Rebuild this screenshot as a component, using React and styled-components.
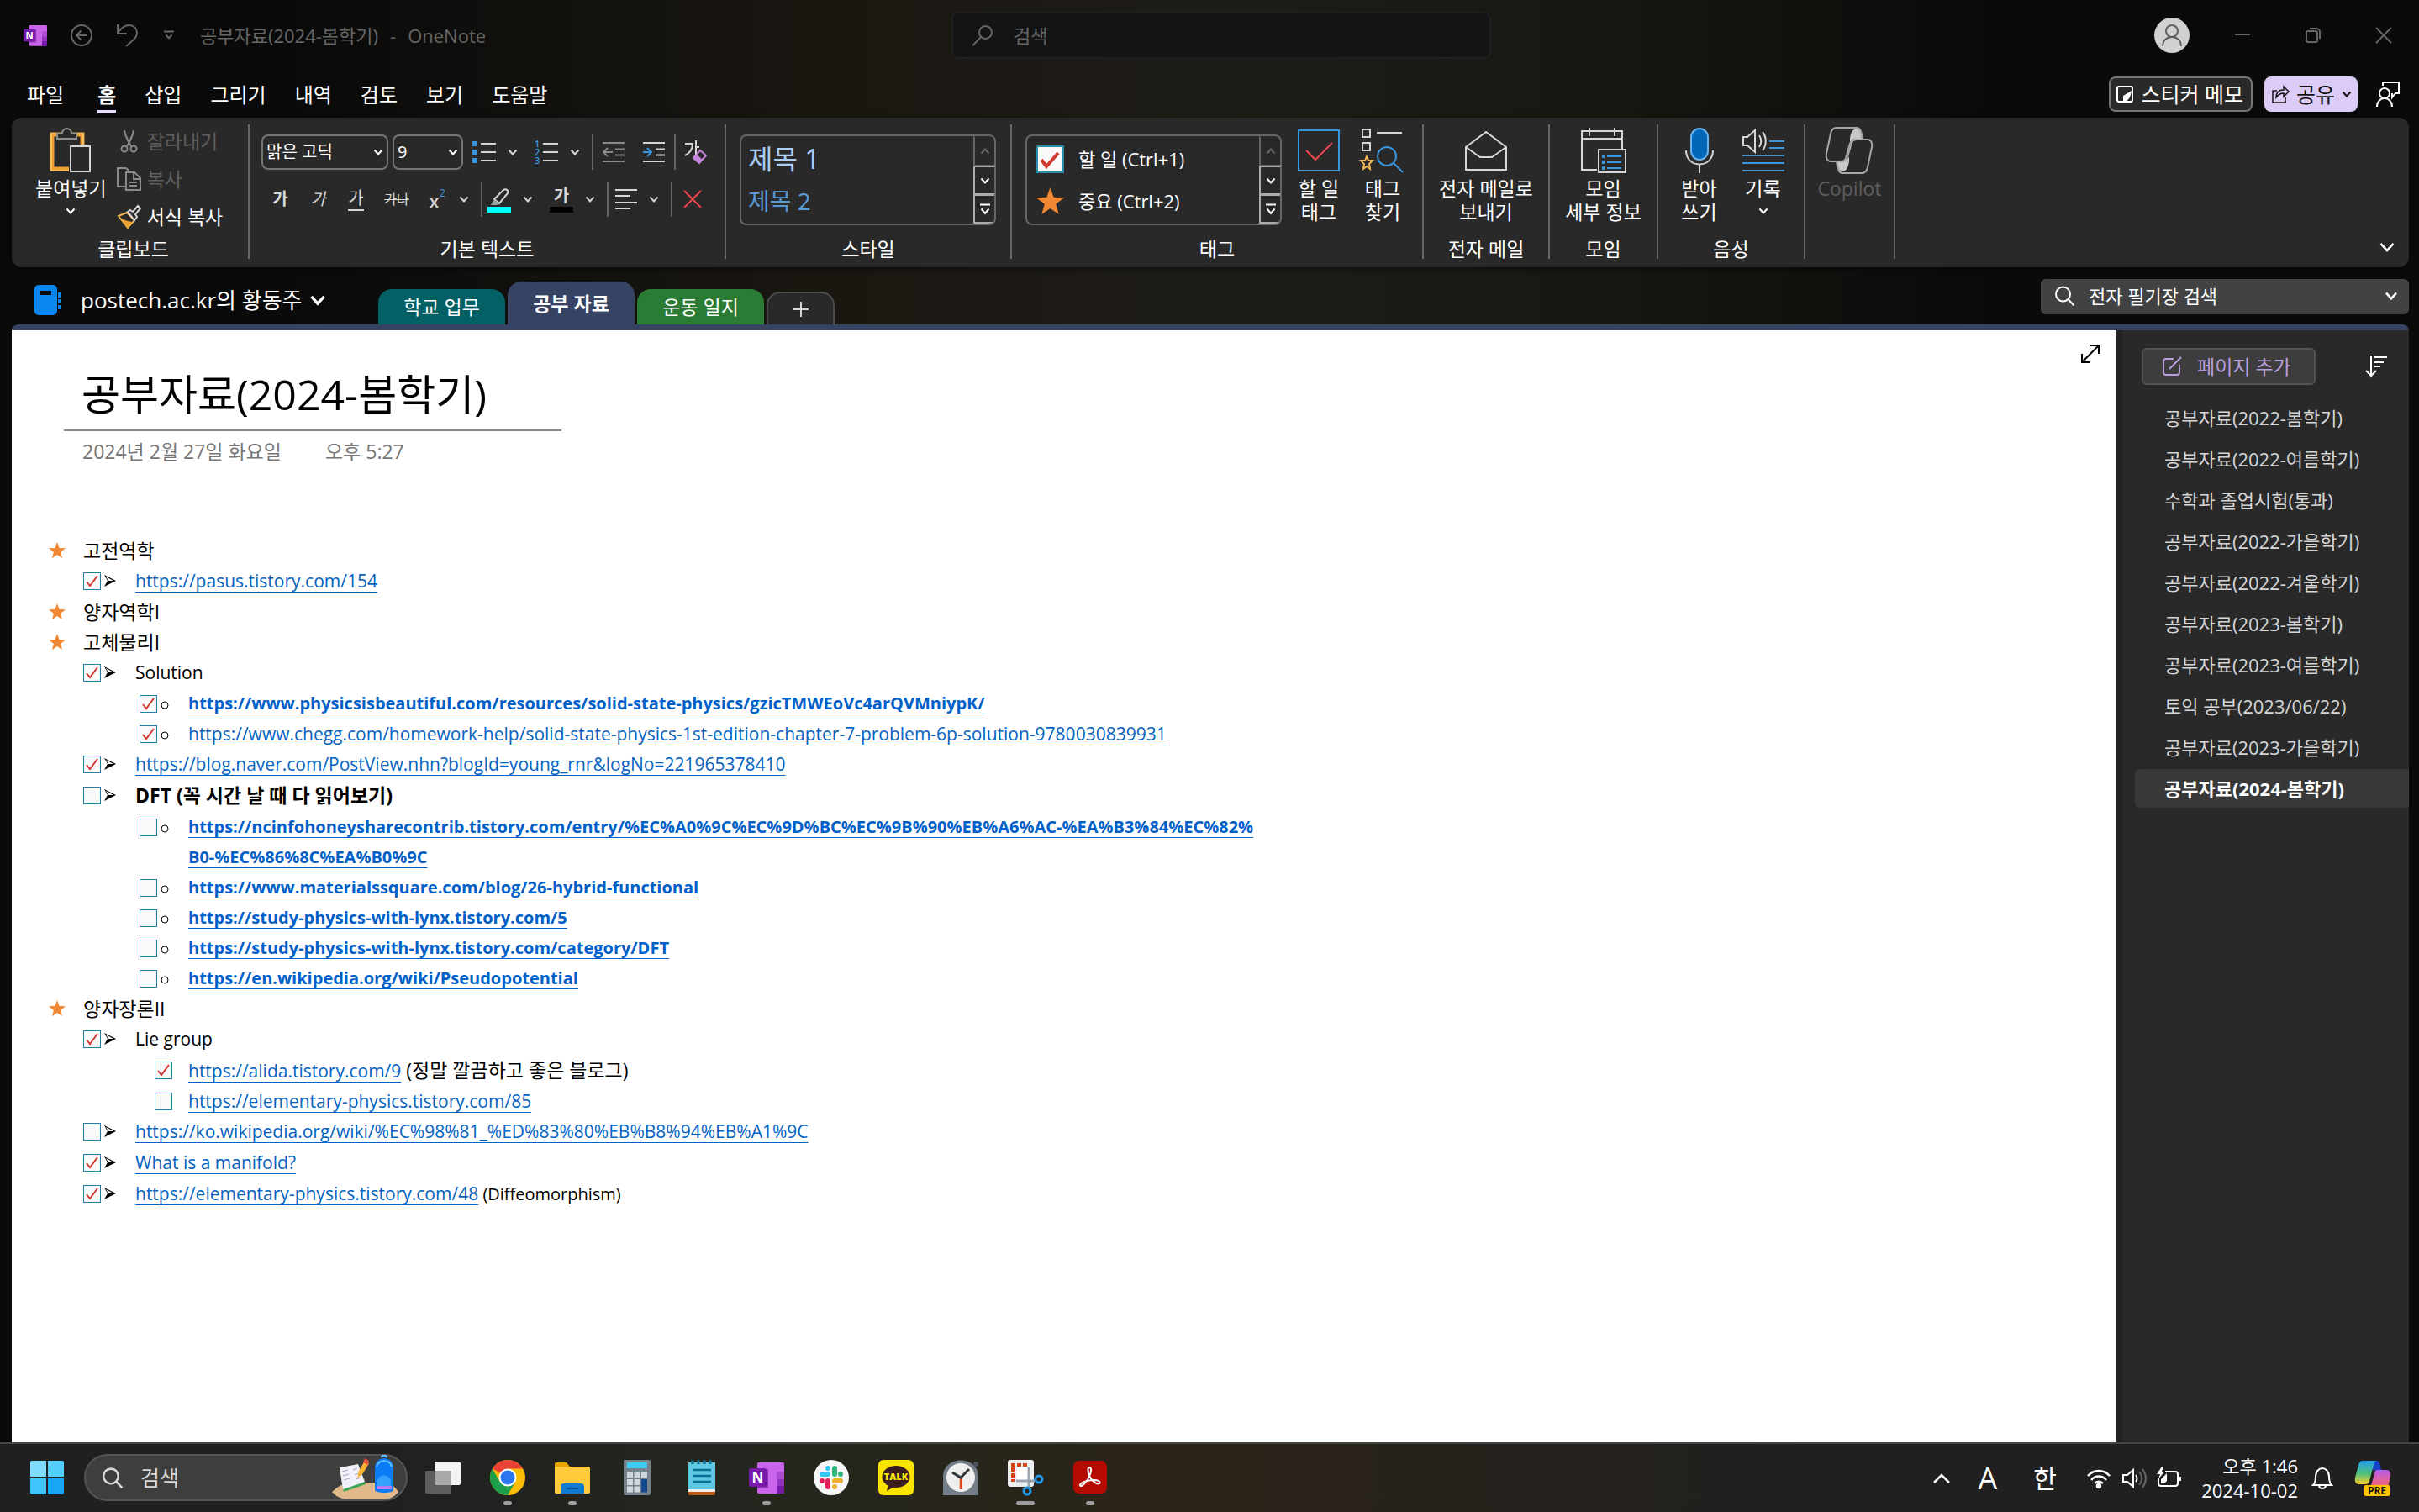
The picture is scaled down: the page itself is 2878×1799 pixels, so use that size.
import React from 'react'
import styled, { createGlobalStyle, css } from 'styled-components'

const color = {
  black: '#0a0a0a',
  panel: '#292929',
  field: '#424242',
  line: '#666666',
  muted: '#5e5e5e',
  text: '#ffffff',
  icon: '#d6d6d6',
  blue: '#3a96dd',
  section: '#364363',
  teal: '#036166',
  green: '#2a7b34',
  lilac: '#dccbf7',
  link: '#0563c1',
  linkBold: '#0060c8',
  star: '#ef8733',
}

const GlobalStyle = createGlobalStyle`
  * {
    box-sizing: border-box;
  }
  body {
    margin: 0;
    background: ${color.black};
    color: ${color.text};
    font-family: 'Open Sans', 'Noto Sans CJK KR', sans-serif;
    font-size: 22px;
    line-height: 28px;
  }
  button, input, select {
    font: inherit;
    color: inherit;
    background: none;
    border: none;
    padding: 0;
    margin: 0;
    outline: none;
  }
  ul {
    list-style: none;
    margin: 0;
    padding: 0;
  }
`

const Svg = styled.svg.attrs((p) => ({
  fill: p.fill || 'none',
  stroke: p.stroke || 'currentColor',
  strokeWidth: p.strokeWidth || 2,
}))`
  display: block;
  flex: none;
  overflow: visible;
`

const Icon = ({ w = 28, h = 28, box, children, ...rest }) => (
  <Svg width={w} height={h} viewBox={box || `0 0 ${w} ${h}`} aria-hidden="true" {...rest}>
    {children}
  </Svg>
)

/* ---------- small shared icons ---------- */

const Chevron = ({ size = 12, weight = 2 }) => (
  <Icon w={size} h={size} box="0 0 12 12" strokeWidth={weight}>
    <path d="M1.500 3.500 6 8.500l4.500-5" />
  </Icon>
)

const SearchIcon = ({ flip, size = 26, weight = 2 }) => (
  <Icon w={size} h={size} box="0 0 26 26" strokeWidth={weight}>
    {flip ? <path d="M24 9.500a7.500 7.500 0 1 1-15 0 7.500 7.500 0 0 1 15 0ZM11 15 1.500 25" /> : <path d="M20 11a8.500 8.500 0 1 1-17 0 8.500 8.500 0 0 1 17 0ZM17.500 17l7 7.500" />}
  </Icon>
)

const StarIcon = ({ size = 22 }) => (
  <Icon w={size} h={size} box="0 0 22 22" stroke="none" fill={color.star}>
    <path d="M11 0l2.800 7.800 8.200.3-6.500 5.100 2.300 8.100L11 16.600l-6.800 4.700 2.300-8.100L0 8.100l8.200-.3z" />
  </Icon>
)

const MoreGlyph = () => (
  <Icon w={14} h={16}>
    <path d="M1 2.500h12M2.500 7.500 7 13l4.500-5.500" />
  </Icon>
)

/* ---------- title bar ---------- */

const Page = styled.div`
  min-height: 100vh;
  display: flex;
  flex-direction: column;
  background: linear-gradient(90deg, #0a0a0a 12%, #1a1711 34%, #1e1c17 50%, #171811 66%, #0a0a0a 82%);
`

const TitleBar = styled.header`
  display: grid;
  grid-template-columns: 1fr 642px 1fr;
  align-items: center;
  height: 84px;
  padding-left: 28px;
  color: ${color.line};
`

const TitleLeft = styled.div`
  display: flex;
  align-items: center;
  gap: 28px;
`

const WindowTitle = styled.div`
  display: flex;
  gap: 14px;
`

const PlainButton = styled.button`
  display: flex;
  align-items: center;
  justify-content: center;
`

const TitleSearch = styled.label`
  display: flex;
  align-items: center;
  gap: 24px;
  height: 56px;
  padding-left: 22px;
  border: 2px solid #1f1f1f;
  border-radius: 8px;
  background: #141414;
`

const SearchInput = styled.input`
  flex: 1;
  min-width: 0;
  &::placeholder {
    color: inherit;
    opacity: 1;
  }
`

const WindowButtons = styled.div`
  display: flex;
  justify-content: flex-end;
`

const WindowButton = styled(PlainButton)`
  width: 84px;
  height: 84px;
`

const Avatar = styled.span`
  display: flex;
  align-items: center;
  justify-content: center;
  width: 42px;
  height: 42px;
  border-radius: 50%;
  background: #d1d1d1;
  color: #5c5c5c;
`

const OneNoteLogo = ({ size = 28 }) => (
  <Icon w={size} h={size} box="0 0 42 42" stroke="none">
    <rect x="10" y="3" width="32" height="37" rx="2" fill="#ca64ea" />
    <path d="M33 14h9v9h-9z" fill="#ae4bd5" />
    <path d="M33 23h9v8h-9z" fill="#9332bf" />
    <path d="M33 31h9v7a2 2 0 0 1-2 2h-7z" fill="#7719aa" />
    <path d="M10 11h13v23H10z" fill="#5b1389" opacity=".5" />
    <rect x="0" y="10" width="21" height="22" rx="2" fill="#7719aa" />
    <text x="10.500" y="27" textAnchor="middle" fill="#fff" fontSize="17" fontWeight="700">N</text>
  </Icon>
)

const AppTitleBar = () => (
  <TitleBar>
    <TitleLeft>
      <OneNoteLogo />
      <PlainButton aria-label="뒤로">
        <Icon w={26} h={26}>
          <circle cx="13" cy="13" r="12" />
          <path d="M20 13H7M12.500 7.500 7 13l5.500 5.500" />
        </Icon>
      </PlainButton>
      <PlainButton aria-label="실행 취소">
        <Icon w={26} h={28}>
          <path d="M2 1v11h11M2 11.500C6 5 11 2 16 2c5 0 9 4 9 9 0 7-7 10-13 16" />
        </Icon>
      </PlainButton>
      <PlainButton aria-label="빠른 실행 도구 모음">
        <Icon w={18} h={12}>
          <path d="M3 1.500h12M5.500 5.500 9 9.500l3.500-4" />
        </Icon>
      </PlainButton>
      <WindowTitle>
        <span>공부자료(2024-봄학기)</span>
        <span>-</span>
        <span>OneNote</span>
      </WindowTitle>
    </TitleLeft>
    <TitleSearch>
      <SearchIcon flip />
      <SearchInput aria-label="검색" placeholder="검색" />
    </TitleSearch>
    <WindowButtons>
      <WindowButton aria-label="계정">
        <Avatar>
          <Icon w={26} h={28}>
            <circle cx="13" cy="9" r="7" />
            <path d="M2 27c0-7 5-11 11-11s11 4 11 11" />
          </Icon>
        </Avatar>
      </WindowButton>
      <WindowButton aria-label="최소화">
        <Icon w={18} h={18}><path d="M0 8h18" /></Icon>
      </WindowButton>
      <WindowButton aria-label="이전 크기로 복원">
        <Icon w={18} h={18}>
          <rect x="1" y="4" width="13" height="13" rx="2" />
          <path d="M5 1h8a4 4 0 0 1 4 4v8" />
        </Icon>
      </WindowButton>
      <WindowButton aria-label="닫기">
        <Icon w={18} h={18}><path d="m0 0 18 18M18 0 0 18" /></Icon>
      </WindowButton>
    </WindowButtons>
  </TitleBar>
)

/* ---------- menu ---------- */

const MenuRow = styled.div`
  display: flex;
  align-items: flex-start;
  justify-content: space-between;
  height: 56px;
  padding: 7px 23px 0 32px;
`

const MenuTabs = styled.nav`
  display: flex;
  gap: 34px;
`

const MenuTab = styled.button`
  height: 44px;
  padding-top: 3px;
  border-bottom: 4px solid ${(p) => (p.$active ? '#e8dcff' : 'transparent')};
  font-size: 24px;
  font-weight: ${(p) => (p.$active ? 700 : 400)};
  line-height: 34px;
  &:first-child {
    margin-right: 6px;
  }
`

const MenuActions = styled.div`
  display: flex;
  align-items: center;
`

const ActionButton = styled.button`
  display: flex;
  align-items: center;
  justify-content: space-between;
  height: 42px;
  padding: 0 9px 0 7px;
  border: 2px solid #757575;
  border-radius: 8px;
  background: ${color.panel};
  font-size: 25px;
  width: 171px;
`

const ShareButton = styled(ActionButton)`
  width: 111px;
  margin: 0 22px 0 14px;
  border-color: ${color.lilac};
  background: ${color.lilac};
  color: #111111;
  padding: 0 5px 0 7px;
`

const tabs = ['파일', '홈', '삽입', '그리기', '내역', '검토', '보기', '도움말']

const Menu = () => (
  <MenuRow>
    <MenuTabs>
      {tabs.map((name) => (
        <MenuTab key={name} $active={name === '홈'}>{name}</MenuTab>
      ))}
    </MenuTabs>
    <MenuActions>
      <ActionButton>
        <Icon w={20} h={20}>
          <rect x="1" y="1" width="18" height="18" rx="2" />
          <path d="M18 6 8 12v6h4c3-2 5-5 6-12Z" fill="#fff" stroke="none" />
        </Icon>
        스티커 메모
      </ActionButton>
      <ShareButton>
        <Icon w={21} h={22} strokeWidth="1.500">
          <path d="M6 7H1v14h15v-6M5 15c0-6 3-9 9-9V2l6 6-6 6v-4c-4 0-6 1-9 5Z" />
        </Icon>
        공유
        <Chevron size={12} />
      </ShareButton>
      <PlainButton aria-label="의견">
        <Icon w={28} h={30}>
          <circle cx="10" cy="14" r="6" />
          <path d="M1 30c0-6 4-10 9-10s9 4 9 10M8 5V1h19v13h-4l-4 5v-5" />
        </Icon>
      </PlainButton>
    </MenuActions>
  </MenuRow>
)

/* ---------- ribbon ---------- */

const RibbonBar = styled.section`
  display: flex;
  height: 178px;
  margin: 0 12px 0 14px;
  padding: 8px 0 10px 8px;
  border-radius: 12px;
  background: ${color.panel};
  box-shadow: 0 2px 6px rgba(0, 0, 0, 0.5);
`

const Group = styled.div`
  display: flex;
  flex-direction: column;
  justify-content: space-between;
  width: ${(p) => p.$width}px;
  border-right: 2px solid ${color.line};
`

const GroupBody = styled.div`
  display: flex;
  justify-content: ${(p) => p.$justify || 'flex-start'};
  padding-left: ${(p) => p.$pad || 0}px;
`

const GroupLabel = styled.div`
  text-align: center;
  font-size: 23px;
  line-height: 24px;
`

const BigButton = styled.button`
  display: flex;
  flex-direction: column;
  align-items: center;
  min-width: 76px;
  padding-top: 3px;
  white-space: pre-line;
  font-size: 23px;
  color: ${(p) => (p.$off ? color.muted : color.text)};
  & > svg {
    margin-top: 7px;
  }
`

const BigIcon = styled.span`
  display: flex;
  align-items: center;
  height: 56px;
  margin-bottom: 3px;
  color: ${color.icon};
`

const SmallColumn = styled.div`
  display: flex;
  flex-direction: column;
  gap: 5px;
  margin-left: 12px;
`

const SmallButton = styled.button`
  display: flex;
  align-items: center;
  gap: 7px;
  height: 40px;
  font-size: 23px;
  color: ${(p) => (p.$off ? color.muted : color.text)};
`

const ToolRows = styled.div`
  display: flex;
  flex-direction: column;
  gap: 14px;
  padding-top: 12px;
`

const ToolRow = styled.div`
  display: flex;
  align-items: center;
  height: 42px;
`

const Tool = styled.button`
  display: flex;
  align-items: center;
  justify-content: center;
  width: ${(p) => p.$width || 48}px;
  height: 42px;
  color: ${color.icon};
`

const Split = styled(Tool)`
  justify-content: flex-start;
  gap: 14px;
  width: 74px;
  padding-left: 6px;
`

const Divider = styled.span`
  width: 2px;
  height: 42px;
  background: ${color.line};
`

const SelectBox = styled.label`
  display: grid;
  align-items: center;
  width: ${(p) => p.$width}px;
  height: 42px;
  margin-right: 5px;
  border: 2px solid #757575;
  border-radius: 8px;
  & > * {
    grid-area: 1 / 1;
  }
  & > svg {
    justify-self: end;
    margin-right: 4px;
  }
`

const Select = styled.select`
  appearance: none;
  height: 36px;
  padding-left: 4px;
  font-size: 20px;
  option {
    background: ${color.panel};
  }
`

const Ga = styled.span`
  font-size: 20px;
  line-height: 26px;
  font-weight: ${(p) => (p.$bold ? 700 : 400)};
  font-style: ${(p) => (p.$italic ? 'italic' : 'normal')};
  ${(p) => p.$under && css`border-bottom: 2px solid ${color.icon};`}
  ${(p) => p.$strike && css`
    text-decoration: line-through;
    font-size: 16px;
  `}
`

const ColorMark = styled.span`
  display: flex;
  flex-direction: column;
  align-items: center;
  justify-content: flex-end;
  width: 28px;
  height: 32px;
  border-bottom: 7px solid ${(p) => p.$color};
`

const Gallery = styled.div`
  display: flex;
  width: 305px;
  height: 108px;
  margin-top: 12px;
  border: 2px solid ${color.line};
  border-radius: 8px;
  overflow: hidden;
`

const GalleryItems = styled.div`
  flex: 1;
  display: flex;
  flex-direction: column;
  justify-content: space-around;
  align-items: flex-start;
  padding: 2px 0 2px ${(p) => p.$pad}px;
`

const StyleItem = styled.button`
  font-size: ${(p) => p.$size}px;
  line-height: 46px;
  color: ${(p) => p.$color};
`

const TagItem = styled.button`
  display: flex;
  align-items: center;
  gap: 17px;
  height: 46px;
`

const GalleryScroll = styled.div`
  display: grid;
  grid-template-rows: 36px 34px 34px;
  width: 25px;
`

const ScrollButton = styled(PlainButton)`
  border-left: 2px solid ${(p) => (p.$off ? color.line : '#ababab')};
  border-bottom: 2px solid ${(p) => (p.$off ? color.line : '#ababab')};
  border-top: 1px solid ${(p) => (p.$off ? 'transparent' : '#ababab')};
  color: ${(p) => (p.$off ? color.line : color.text)};
`

const TickIcon = ({ size = 33 }) => (
  <Icon w={size} h={size} box="0 0 33 33">
    <rect x="1" y="1" width="31" height="31" fill="#fafafa" stroke="#2a8dad" />
    <path d="m6 17 6 8L26 9" stroke="#d13a32" strokeWidth="4" />
  </Icon>
)

const Collapse = styled(PlainButton)`
  align-self: flex-end;
  margin: 0 16px 2px auto;
  height: 24px;
`

const Scroller = () => (
  <GalleryScroll>
    <ScrollButton $off aria-label="위로">
      <Icon w={12} h={12}><path d="M1.500 8.500 6 3.500l4.500 5" /></Icon>
    </ScrollButton>
    <ScrollButton aria-label="아래로"><Chevron /></ScrollButton>
    <ScrollButton aria-label="자세히"><MoreGlyph /></ScrollButton>
  </GalleryScroll>
)

const ListGlyph = ({ numbered }) => (
  <Icon w={28} h={28}>
    <path d="M10 4h18M10 14h18M10 24h18" />
    {numbered ? (
      <g fill={color.blue} stroke="none" fontSize="11" fontWeight="600">
        <text x="0" y="8">1</text>
        <text x="0" y="18">2</text>
        <text x="0" y="28">3</text>
      </g>
    ) : (
      <path d="M0 4h6M0 14h6M0 24h6" stroke={color.blue} strokeWidth="6" />
    )}
  </Icon>
)

const Ribbon = () => (
  <RibbonBar>
    <Group $width={275}>
      <GroupBody $pad={20}>
        <BigButton>
          <BigIcon>
            <Icon w={48} h={54}>
              <path d="M22 49H2V8h36v12" stroke="#f0a030" strokeWidth="5" />
              <path d="M22 51H1V7h38v13" stroke="#fbd68c" strokeWidth="1" />
              <path d="M8 12V7h6c0-8 11-8 11 0h6v6H8Z" fill={color.panel} stroke="#8f8f8f" />
              <rect x="24" y="22" width="23" height="30" fill={color.panel} />
            </Icon>
          </BigIcon>
          붙여넣기
          <Chevron />
        </BigButton>
        <SmallColumn>
          <SmallButton $off>
            <Icon w={29} h={28} stroke="#8a8a8a">
              <path d="M9 1c1 7 5 14 8 19M20 1c-1 7-5 14-8 19" />
              <circle cx="9" cy="23" r="3.500" />
              <circle cx="20" cy="23" r="3.500" />
            </Icon>
            잘라내기
          </SmallButton>
          <SmallButton $off>
            <Icon w={29} h={28} stroke="#8a8a8a">
              <path d="M10 23H1V1h10l3 3M11 6h10l7 7v14H11ZM20 6v8h8M15 18h9M15 22h9" />
            </Icon>
            복사
          </SmallButton>
          <SmallButton>
            <Icon w={29} h={28}>
              <path d="m2 13 10-4 9 9-8 9Z" stroke="#f0b64f" fill="#292929" />
              <path d="m5 16 8 3 5 1-5 7Z" fill="#f0a030" stroke="none" />
              <path d="m13 8 3-2 3 2 6-7 3 3-6 7 2 3-3 4Z" stroke={color.icon} fill="#292929" />
            </Icon>
            서식 복사
          </SmallButton>
        </SmallColumn>
      </GroupBody>
      <GroupLabel>클립보드</GroupLabel>
    </Group>

    <Group $width={567}>
      <GroupBody $pad={14}>
        <ToolRows>
          <ToolRow>
            <SelectBox $width={151}>
              <Select aria-label="글꼴"><option>맑은 고딕</option></Select>
              <Chevron />
            </SelectBox>
            <SelectBox $width={84}>
              <Select aria-label="글꼴 크기"><option>9</option></Select>
              <Chevron />
            </SelectBox>
            <Split aria-label="글머리 기호"><ListGlyph /><Chevron /></Split>
            <Split aria-label="번호 매기기"><ListGlyph numbered /><Chevron /></Split>
            <Divider />
            <Tool aria-label="내어쓰기">
              <Icon w={26} h={26} stroke="#8a8a8a">
                <path d="M0 2h26M15 9.500h11M15 16.500h11M0 24h26M12 13H1M6 8l-5 5 5 5" />
              </Icon>
            </Tool>
            <Tool aria-label="들여쓰기">
              <Icon w={26} h={26}>
                <path d="M0 2h26M15 9.500h11M15 16.500h11M0 24h26" />
                <path d="M0 13h10M5 8l5 5-5 5" stroke={color.blue} />
              </Icon>
            </Tool>
            <Divider />
            <Tool aria-label="서식 지우기">
              <Icon w={30} h={30}>
                <path d="M2 5h9c0 7-3 11-9 14M15 1v17M15 9h4" />
                <path d="m12 22 8-9 7 6-8 9Z" fill={color.panel} stroke="#c486dd" />
                <path d="m12 22 4-4 7 6-4 4Z" fill="#c486dd" stroke="none" />
              </Icon>
            </Tool>
          </ToolRow>
          <ToolRow>
            <Tool $width={45}><Ga $bold>가</Ga></Tool>
            <Tool $width={45}><Ga $italic>가</Ga></Tool>
            <Tool $width={45}><Ga $under>가</Ga></Tool>
            <Tool $width={52}><Ga $strike>가나</Ga></Tool>
            <Split aria-label="위 첨자">
              <Icon w={28} h={28} stroke="none" fill={color.icon}>
                <text x="7" y="24" fontSize="20" fontWeight="600">x</text>
                <text x="19" y="11" fontSize="12" fill={color.blue}>2</text>
              </Icon>
              <Chevron />
            </Split>
            <Divider />
            <Split aria-label="강조색">
              <ColorMark $color="#00ffff">
                <Icon w={26} h={22}>
                  <path d="m7 13 11-11c3-2 7 1 5 4L13 18Z" />
                  <path d="m7 13 6 5-3 2H3Z" fill="#a0a0a0" stroke="none" />
                </Icon>
              </ColorMark>
              <Chevron />
            </Split>
            <Split aria-label="글꼴 색">
              <ColorMark $color="#000000"><Ga $bold>가</Ga></ColorMark>
              <Chevron />
            </Split>
            <Divider />
            <Split aria-label="맞춤">
              <Icon w={28} h={26}><path d="M2 2h26M2 9h18M2 17h26M2 24h18" /></Icon>
              <Chevron />
            </Split>
            <Divider />
            <Tool aria-label="삭제">
              <Icon w={22} h={22} stroke="#e8484b"><path d="m1 1 20 20M21 1 1 21" /></Icon>
            </Tool>
          </ToolRow>
        </ToolRows>
      </GroupBody>
      <GroupLabel>기본 텍스트</GroupLabel>
    </Group>

    <Group $width={340}>
      <GroupBody $pad={16}>
        <Gallery>
          <GalleryItems $pad={8}>
            <StyleItem $size={32} $color="#a9cdf5">제목 1</StyleItem>
            <StyleItem $size={28} $color="#5b9bd5">제목 2</StyleItem>
          </GalleryItems>
          <Scroller />
        </Gallery>
      </GroupBody>
      <GroupLabel>스타일</GroupLabel>
    </Group>

    <Group $width={490}>
      <GroupBody $pad={16}>
        <Gallery>
          <GalleryItems $pad={11}>
            <TagItem><TickIcon />할 일 (Ctrl+1)</TagItem>
            <TagItem><StarIcon size={33} />중요 (Ctrl+2)</TagItem>
          </GalleryItems>
          <Scroller />
        </Gallery>
        <GroupBody $pad={6}>
          <BigButton>
            <BigIcon>
              <Icon w={50} h={50}>
                <rect x="1" y="1" width="48" height="48" stroke={color.blue} />
                <path d="m10 25 11 11 20-20" stroke="#e8484b" />
              </Icon>
            </BigIcon>
            {'할 일\n태그'}
          </BigButton>
          <BigButton>
            <BigIcon>
              <Icon w={50} h={54}>
                <path d="M1 2h9v9H1ZM1 18h9v9H1ZM18 6h30" />
                <path d="m6 34 2 5h5l-4 4 1 6-4-3-4 3 1-6-4-4h5Z" stroke="#f0b64f" />
                <circle cx="30" cy="34" r="11" stroke={color.blue} />
                <path d="m38 42 11 11" stroke={color.blue} />
              </Icon>
            </BigIcon>
            {'태그\n찾기'}
          </BigButton>
        </GroupBody>
      </GroupBody>
      <GroupLabel>태그</GroupLabel>
    </Group>

    <Group $width={150}>
      <GroupBody $justify="center">
        <BigButton>
          <BigIcon>
            <Icon w={50} h={48}>
              <path d="M1 47V20L25 2l24 18v27ZM1 20l17 12h14l17-12" />
            </Icon>
          </BigIcon>
          {'전자 메일로\n보내기'}
        </BigButton>
      </GroupBody>
      <GroupLabel>전자 메일</GroupLabel>
    </Group>

    <Group $width={129}>
      <GroupBody $justify="center">
        <BigButton>
          <BigIcon>
            <Icon w={54} h={54}>
              <path d="M19 50H1V4h48v22M1 13h48M10 0v10M40 0v10" />
              <rect x="21" y="26" width="32" height="27" />
              <path d="M31 34h17M31 41h17M31 48h17" stroke={color.blue} />
              <path d="M25 34h3M25 41h3M25 48h3" stroke={color.blue} strokeWidth="4" />
            </Icon>
          </BigIcon>
          {'모임\n세부 정보'}
        </BigButton>
      </GroupBody>
      <GroupLabel>모임</GroupLabel>
    </Group>

    <Group $width={175}>
      <GroupBody $justify="center">
        <BigButton>
          <BigIcon>
            <Icon w={34} h={54}>
              <rect x="7" y="1" width="20" height="37" rx="10" fill="#0067b8" stroke="#6fb2ea" />
              <path d="M1 27c0 22 32 22 32 0M17 44v10" />
            </Icon>
          </BigIcon>
          {'받아\n쓰기'}
        </BigButton>
        <BigButton>
          <BigIcon>
            <Icon w={50} h={50}>
              <path d="M1 9h5l9-8v26l-9-8H1ZM20 7c3 4 3 10 0 14M24 3c5 6 5 16 0 22" />
              <path d="M32 14h18M32 22h18M0 31h50M0 40h50M0 49h50" stroke={color.blue} />
            </Icon>
          </BigIcon>
          기록
          <Chevron />
        </BigButton>
      </GroupBody>
      <GroupLabel>음성</GroupLabel>
    </Group>

    <Group $width={107}>
      <GroupBody $justify="center">
        <BigButton $off>
          <BigIcon>
            <Icon w={56} h={56} stroke="#a8a8a8">
              <path d="M29 13c1-5 3-11 8-11 4 0 5 5 6 12h-8c-3 0-5 2-6 5ZM28 41c-1 6-3 12-8 12-4 0-5-5-7-12h7c4 0 6-2 8-6Z" fill="#c8c8c8" stroke="none" />
              <path d="M13 1h24c4 0 5 4 6 8l1 6h-9c-3 0-5 2-6 5l-5 17c-1 3-3 4-6 4H6c-4 0-6-4-5-9L6 8c1-5 3-7 7-7Z" />
              <path d="M43 55H20c-4 0-5-4-6-8l-1-6h7c3 0 5-2 6-5l5-17c1-3 3-4 6-4h13c4 0 6 4 5 9l-5 24c-1 5-3 7-7 7Z" />
            </Icon>
          </BigIcon>
          Copilot
        </BigButton>
      </GroupBody>
    </Group>
    <Collapse aria-label="리본 축소">
      <Chevron size={20} weight={1.500} />
    </Collapse>
  </RibbonBar>
)

/* ---------- notebook row ---------- */

const NotebookRow = styled.div`
  display: flex;
  align-items: flex-end;
  height: 68px;
  padding: 0 12px 0 41px;
`

const NotebookName = styled.button`
  display: flex;
  align-items: center;
  width: 409px;
  height: 58px;
  font-size: 26px;
  & > svg:first-child {
    margin-right: 24px;
  }
  & > svg:last-child {
    margin-left: 8px;
  }
`

const SectionTab = styled.button`
  width: 151px;
  height: ${(p) => (p.$active ? 51 : 42)}px;
  margin-right: 3px;
  border-radius: 16px 16px 0 0;
  background: ${(p) => p.$color};
  font-size: 23px;
  font-weight: ${(p) => (p.$active ? 700 : 400)};
`

const AddTab = styled(PlainButton)`
  width: 81px;
  height: 39px;
  border: 2px solid #4d4d4d;
  border-bottom: none;
  border-radius: 16px 16px 0 0;
  background: ${color.panel};
  color: ${color.icon};
`

const NotebookSearch = styled.label`
  display: flex;
  align-items: center;
  gap: 16px;
  width: 438px;
  height: 42px;
  margin: 0 0 12px auto;
  padding: 0 13px 2px 15px;
  border-radius: 6px;
  background: ${color.field};
`

const Notebook = () => (
  <NotebookRow>
    <NotebookName>
      <Icon w={31} h={36} stroke="none" fill="#0a86f0">
        <rect width="27" height="36" rx="5" />
        <path d="M7 7h13v5H7z" fill="#0a0a0a" />
        <path d="M28 9h3v6h-3zM28 17h3v5h-3zM28 24h3v5h-3z" />
      </Icon>
      postech.ac.kr의 황동주
      <Chevron size={20} weight={2} />
    </NotebookName>
    <SectionTab $color={color.teal}>학교 업무</SectionTab>
    <SectionTab $color={color.section} $active>공부 자료</SectionTab>
    <SectionTab $color={color.green}>운동 일지</SectionTab>
    <AddTab aria-label="새 섹션">
      <Icon w={18} h={18}><path d="M9 0v18M0 9h18" /></Icon>
    </AddTab>
    <NotebookSearch>
      <SearchIcon />
      <SearchInput aria-label="전자 필기장 검색" placeholder="전자 필기장 검색" />
      <Chevron size={16} weight={2} />
    </NotebookSearch>
  </NotebookRow>
)

/* ---------- document ---------- */

const Workspace = styled.main`
  flex: 1;
  display: flex;
  margin: 0 12px 0 14px;
  border-top: 7px solid ${color.section};
  border-radius: 8px 8px 0 0;
  background: #222222;
`

const Sheet = styled.article`
  flex: 1;
  display: flex;
  justify-content: space-between;
  align-items: flex-start;
  padding: 17px 20px 0 0;
  background: #ffffff;
  color: #000000;
`

const Note = styled.div`
  padding-top: 29px;
`

const NoteTitle = styled.h1`
  width: 592px;
  margin: 0 0 10px 62px;
  padding: 0 0 12px 21px;
  border-bottom: 2px solid #8a8a8a;
  font-size: 50px;
  font-weight: 400;
  line-height: 60px;
`

const NoteDate = styled.div`
  display: flex;
  gap: 52px;
  margin: 0 0 86px 84px;
  font-size: 23px;
  color: #767676;
`

const SectionHead = styled.div`
  display: flex;
  align-items: center;
  gap: 21px;
  height: 36px;
  padding-left: 44px;
  font-size: 23px;
`

const Item = styled.li`
  display: flex;
  align-items: flex-start;
  padding-left: ${(p) => (p.$deep ? 152 : 85)}px;
  line-height: ${(p) => (p.$deep ? 36 : 37)}px;
  font-size: ${(p) => (p.$bold && p.$deep ? 20 : 21)}px;
  font-weight: ${(p) => (p.$bold ? 700 : 400)};
`

const Marker = styled.span`
  display: flex;
  align-items: center;
  gap: 4px;
  width: ${(p) => (p.$deep ? 58 : 62)}px;
  height: 36px;
  padding-left: ${(p) => (p.$indent ? 18 : 0)}px;
`

const CheckLabel = styled.label`
  display: grid;
  place-items: center;
  & > * {
    grid-area: 1 / 1;
  }
`

const CheckInput = styled.input`
  appearance: none;
  width: 21px;
  height: 21px;
  border: 1px solid #1f7fa6;
  background: #fafafa;
`

const Link = styled.a`
  color: ${(p) => (p.$bold ? color.linkBold : color.link)};
  text-decoration: underline;
  text-decoration-thickness: 1px;
  text-underline-offset: 5px;
`

const Remark = styled.span`
  font-size: ${(p) => (p.$korean ? 23 : 20)}px;
`

const Check = ({ checked, label }) => (
  <CheckLabel>
    <CheckInput type="checkbox" defaultChecked={checked} aria-label={label} />
    {checked && (
      <Icon w={15} h={15} stroke="#d13a32"><path d="m1 8 4 5 9-12" /></Icon>
    )}
  </CheckLabel>
)

const ArrowBullet = () => (
  <Icon w={14} h={14} stroke="none">
    <path d="m0 0 14 7L0 14l4-7Z" fill="#000" />
    <path d="m2 2 9 5H5Z" fill="#fff" />
  </Icon>
)

const CircleBullet = () => (
  <Icon w={10} h={14} strokeWidth="1">
    <circle cx="5" cy="9" r="4" />
  </Icon>
)

const sections = [
  { title: '고전역학', items: [{ done: true, link: 'https://pasus.tistory.com/154' }] },
  { title: '양자역학I', items: [] },
  {
    title: '고체물리I',
    items: [
      { done: true, text: 'Solution' },
      { deep: true, done: true, bold: true, link: 'https://www.physicsisbeautiful.com/resources/solid-state-physics/gzicTMWEoVc4arQVMniypK/' },
      { deep: true, done: true, link: 'https://www.chegg.com/homework-help/solid-state-physics-1st-edition-chapter-7-problem-6p-solution-9780030839931' },
      { done: true, link: 'https://blog.naver.com/PostView.nhn?blogId=young_rnr&logNo=221965378410' },
      { bold: true, korean: true, text: 'DFT (꼭 시간 날 때 다 읽어보기)' },
      {
        deep: true,
        bold: true,
        link: 'https://ncinfohoneysharecontrib.tistory.com/entry/%EC%A0%9C%EC%9D%BC%EC%9B%90%EB%A6%AC-%EA%B3%84%EC%82%',
        rest: 'B0-%EC%86%8C%EA%B0%9C',
      },
      { deep: true, bold: true, link: 'https://www.materialssquare.com/blog/26-hybrid-functional' },
      { deep: true, bold: true, link: 'https://study-physics-with-lynx.tistory.com/5' },
      { deep: true, bold: true, link: 'https://study-physics-with-lynx.tistory.com/category/DFT' },
      { deep: true, bold: true, link: 'https://en.wikipedia.org/wiki/Pseudopotential' },
    ],
  },
  {
    title: '양자장론II',
    items: [
      { done: true, text: 'Lie group' },
      { deep: true, indent: true, done: true, link: 'https://alida.tistory.com/9', after: '(정말 깔끔하고 좋은 블로그)', korean: true },
      { deep: true, indent: true, link: 'https://elementary-physics.tistory.com/85' },
      { link: 'https://ko.wikipedia.org/wiki/%EC%98%81_%ED%83%80%EB%B8%94%EB%A1%9C' },
      { done: true, link: 'What is a manifold?' },
      { done: true, link: 'https://elementary-physics.tistory.com/48', after: '(Diffeomorphism)' },
    ],
  },
]

const NoteItem = ({ deep, indent, done, bold, link, rest, text, after, korean }) => (
  <Item $deep={deep} $bold={bold}>
    <Marker $deep={deep} $indent={indent}>
      <Check checked={done} label={link || text} />
      {!deep && <ArrowBullet />}
      {deep && !indent && <CircleBullet />}
    </Marker>
    <div>
      {link && (
        <Link href={link.startsWith('http') ? link + (rest || '') : '#'} $bold={bold}>
          {link}
          {rest && <br />}
          {rest}
        </Link>
      )}
      {text && (korean ? <Remark $korean>{text}</Remark> : text)}
      {after && <Remark $korean={korean}> {after}</Remark>}
    </div>
  </Item>
)

const Document = () => (
  <Sheet>
    <Note>
      <NoteTitle>공부자료(2024-봄학기)</NoteTitle>
      <NoteDate>
        <span>2024년 2월 27일 화요일</span>
        <span>오후 5:27</span>
      </NoteDate>
      {sections.map((section) => (
        <section key={section.title}>
          <SectionHead><StarIcon size={20} />{section.title}</SectionHead>
          <ul>
            {section.items.map((item) => (
              <NoteItem key={item.link || item.text} {...item} />
            ))}
          </ul>
        </section>
      ))}
    </Note>
    <PlainButton aria-label="전체 페이지 보기">
      <Icon w={22} h={22}>
        <path d="M1 21 21 1M11 1h10v10M1 11v10h10" />
      </Icon>
    </PlainButton>
  </Sheet>
)

/* ---------- page list ---------- */

const PagePanel = styled.aside`
  width: 341px;
  margin-left: 7px;
  background: ${color.panel};
`

const PanelHead = styled.div`
  display: flex;
  align-items: center;
  justify-content: space-between;
  padding: 21px 26px 16px 23px;
`

const AddPage = styled.button`
  display: flex;
  align-items: center;
  gap: 18px;
  width: 207px;
  height: 44px;
  padding-left: 22px;
  border: 2px solid #525252;
  border-radius: 6px;
  background: #3d3d3d;
  color: #b89fdc;
  font-size: 23px;
`

const PageItem = styled.button`
  display: block;
  width: 326px;
  height: 46px;
  margin: 0 0 3px 15px;
  padding-left: 35px;
  border-radius: 6px 0 0 6px;
  text-align: left;
  background: ${(p) => (p.$active ? '#383838' : 'none')};
  color: ${(p) => (p.$active ? color.text : color.icon)};
  font-weight: ${(p) => (p.$active ? 700 : 400)};
`

const pages = [
  '공부자료(2022-봄학기)',
  '공부자료(2022-여름학기)',
  '수학과 졸업시험(통과)',
  '공부자료(2022-가을학기)',
  '공부자료(2022-겨울학기)',
  '공부자료(2023-봄학기)',
  '공부자료(2023-여름학기)',
  '토익 공부(2023/06/22)',
  '공부자료(2023-가을학기)',
  '공부자료(2024-봄학기)',
]

const PageList = () => (
  <PagePanel>
    <PanelHead>
      <AddPage>
        <Icon w={24} h={24}>
          <path d="M14 3H5a3 3 0 0 0-3 3v13a3 3 0 0 0 3 3h13a3 3 0 0 0 3-3v-9M9 15 23 1" />
        </Icon>
        페이지 추가
      </AddPage>
      <PlainButton aria-label="정렬">
        <Icon w={26} h={26}>
          <path d="M7 0v24M1 18l6 6 6-6M11 2h15M11 8h11M11 13h7" />
        </Icon>
      </PlainButton>
    </PanelHead>
    {pages.map((name) => (
      <PageItem key={name} $active={name === '공부자료(2024-봄학기)'}>{name}</PageItem>
    ))}
  </PagePanel>
)

/* ---------- taskbar ---------- */

const Bar = styled.footer`
  display: flex;
  align-items: flex-start;
  justify-content: space-between;
  height: 83px;
  padding: 0 24px 0 36px;
  border-top: 2px solid #454545;
  background: linear-gradient(90deg, #202020 15%, #24261e 32%, #2a2419 46%, #28221a 55%, #202020 76%);
`

const BarGroup = styled.div`
  display: flex;
  align-items: flex-start;
  padding-top: 12px;
`

const StartButton = styled(PlainButton)`
  width: 40px;
  height: 56px;
  margin-right: 24px;
`

const BarSearch = styled.label`
  display: flex;
  align-items: center;
  gap: 20px;
  width: 385px;
  height: 56px;
  margin-right: 3px;
  padding: 0 8px 0 18px;
  border: 2px solid #565656;
  border-radius: 28px;
  background: #3e3e3e;
  color: #d8d8d8;
  font-size: 25px;
`

const TaskButton = styled.button`
  display: flex;
  flex-direction: column;
  align-items: center;
  justify-content: space-between;
  width: 77px;
  height: 61px;
  padding-top: 7px;
`

const Running = styled.span`
  width: ${(p) => (p.$wide ? 22 : 10)}px;
  height: 5px;
  border-radius: 3px;
  background: ${(p) => (p.$on ? '#9d9d9d' : 'transparent')};
`

const Tray = styled.div`
  display: flex;
  align-items: center;
  height: 81px;
`

const TrayItem = styled(PlainButton)`
  width: ${(p) => p.$width}px;
  height: 60px;
  font-size: ${(p) => p.$size || 22}px;
`

const Clock = styled.button`
  width: 132px;
  line-height: 29px;
  text-align: right;
`

const DeskPicture = () => (
  <Icon w={80} h={54} stroke="none">
    <path d="M0 44c8-7 14-11 24-11h38c7 0 12 4 17 11-5 7-12 9-20 9H22C12 53 5 50 0 44Z" fill="#e0b88a" />
    <path d="m9 17 22-6 9 24-26 9Z" fill="#3da554" />
    <path d="m9 15 12-2 4 24-12 4ZM21 13l10-2 8 21-14 5Z" fill="#f3f0fa" />
    <path d="m12 20 7-2M13 25l7-2M14 30l7-2M25 18l5-2M27 24l5-2M29 29l5-2" stroke="#aaa3c8" strokeWidth="1" />
    <path d="m30 28 2-9L39 7l5 3-7 12Z" fill="#f9b233" />
    <path d="m37 9 2-5 5 3-2 5Z" fill="#ef4d3c" />
    <path d="M51 16c0-16 22-16 22 0v26c0 4-22 4-22 0Z" fill="#0a7cf5" />
    <path d="M54 32c0-10 16-10 16 0v9H54Z" fill="#36a0ff" />
    <path d="M53 37h18v4H53z" fill="#b07cf0" />
    <path d="M53 14c2-9 16-9 18 0M59 3c0-3 6-3 6 0" stroke="#69c3ff" />
  </Icon>
)

const apps = [
  {
    name: '작업 보기',
    art: (
      <>
        <rect x="0" y="13" width="31" height="27" rx="2" fill="#5e5e5e" />
        <rect x="11" y="2" width="31" height="28" rx="2" fill="#f4f4f4" />
        <path d="M11 13h20v17H11z" fill="#a9a9a9" />
      </>
    ),
  },
  {
    name: 'Chrome',
    on: true,
    art: (
      <>
        <circle cx="21" cy="21" r="21" fill="#fbbc04" />
        <path d="M21 21 3 10.500A21 21 0 0 1 39.200 10.500H21Z" fill="#ea4335" />
        <path d="M2.800 10.500A21 21 0 0 0 21 42l9.100-15.800L21 21l-9.100 5.300Z" fill="#1e9e4a" />
        <circle cx="21" cy="21" r="10.500" fill="#fff" />
        <circle cx="21" cy="21" r="8.500" fill="#2b78f0" />
      </>
    ),
  },
  {
    name: '파일 탐색기',
    on: true,
    art: (
      <>
        <path d="M0 5a2 2 0 0 1 2-2h12l4 5h22v8H0Z" fill="#e8a400" />
        <rect x="0" y="8" width="42" height="32" rx="2" fill="#ffcb3d" />
        <path d="M7 40V32a4 4 0 0 1 4-4h20a4 4 0 0 1 4 4v8Z" fill="#1179cf" />
        <path d="M14 34h14" stroke="#0a5298" />
      </>
    ),
  },
  {
    name: '계산기',
    art: (
      <>
        <rect x="5" y="0" width="32" height="42" rx="2" fill="#78828c" />
        <rect x="9" y="3" width="24" height="7" fill="#3ccdf5" />
        <path d="M9 14h7v7H9zM17.500 14h7v7h-7zM26 14h7v7h-7zM9 23h7v7H9zM17.500 23h7v7h-7zM9 31.500h7v7H9zM17.500 31.500h7v7h-7z" fill="#cfd6dd" />
        <path d="M26 23h7v15.500h-7z" fill="#12488e" />
      </>
    ),
  },
  {
    name: '메모장',
    art: (
      <>
        <rect x="5" y="3" width="32" height="39" rx="2" fill="#b85a10" />
        <path d="M5 33h32v5H5z" fill="#eeeeee" />
        <path d="M5 3h32v32H5z" fill="#5ec8e2" />
        <path d="M10 12h22M10 19h22M10 26h22" stroke="#0a6f94" strokeWidth="2.500" />
        <path d="M10 0v5M17 0v5M24 0v5M31 0v5" stroke="#0a6f94" strokeWidth="3" />
      </>
    ),
  },
  { name: 'OneNote', on: true, logo: true },
  {
    name: 'Slack',
    art: (
      <>
        <circle cx="21" cy="21" r="21" fill="#f7f7f7" />
        <g strokeWidth="6" strokeLinecap="round">
          <path d="M10 17h7M17 10v0" stroke="#36c5f0" />
          <path d="M25 10v7M32 17v0" stroke="#2eb67d" />
          <path d="M32 25h-7M25 32v0" stroke="#ecb22e" />
          <path d="M17 32v-7M10 25v0" stroke="#e01e5a" />
        </g>
      </>
    ),
  },
  {
    name: '카카오톡',
    art: (
      <>
        <rect width="42" height="42" rx="6" fill="#fbe300" />
        <ellipse cx="21" cy="20" rx="16.500" ry="13" fill="#3a1d1f" />
        <path d="m12 28-2 9 11-6Z" fill="#3a1d1f" />
        <text x="21" y="24" textAnchor="middle" fontSize="11" fontWeight="800" fill="#fbe300">TALK</text>
      </>
    ),
  },
  {
    name: '시계',
    art: (
      <>
        <path d="M0 42V20C0-6 42-6 42 20v22Z" fill="#727d87" />
        <circle cx="39" cy="5" r="3" fill="#4a5258" />
        <circle cx="21" cy="21" r="17" fill="#eeeeee" />
        <path d="M21 21v14" stroke="#e0481c" strokeWidth="2.500" />
        <path d="m11 15 10 6 10-10" stroke="#30363b" strokeWidth="3" />
      </>
    ),
  },
  {
    name: '캡처 도구',
    on: true,
    wide: true,
    art: (
      <>
        <rect width="31" height="32" rx="3" fill="#eceff2" />
        <path d="M4 6h21M6 9v17" stroke="#d8400f" strokeWidth="4" strokeDasharray="5 2" />
        <path d="M11 9h14v16H11z" fill="#fff" stroke="none" />
        <path d="M25 9v25M10 25h22" stroke="#9aa5af" strokeWidth="3" />
        <circle cx="37" cy="23" r="4" stroke="#1f9ae8" strokeWidth="3" />
        <circle cx="23" cy="37" r="4" stroke="#1f9ae8" strokeWidth="3" />
      </>
    ),
  },
  {
    name: 'Acrobat',
    on: true,
    art: (
      <>
        <rect x="1" y="1" width="40" height="39" rx="7" fill="#b30b00" />
        <path d="M20 9c4 0 2 9-3 16-4 6-8 7-8 5 0-3 9-6 16-6 6 0 9 2 7 4-3 2-9-3-12-9-2-5-2-10 0-10Z" stroke="#fff" />
      </>
    ),
  },
]

const Taskbar = () => (
  <Bar>
    <BarGroup>
      <StartButton aria-label="시작">
        <Icon w={40} h={40} stroke="none">
          <path d="M2 0h17v19H0V2a2 2 0 0 1 2-2Z" fill="#7fdcff" />
          <path d="M21 0h17a2 2 0 0 1 2 2v17H21Z" fill="#52d0fb" />
          <path d="M0 21h19v19H2a2 2 0 0 1-2-2Z" fill="#3fc4fb" />
          <path d="M21 21h19v17a2 2 0 0 1-2 2H21Z" fill="#17a5f8" />
        </Icon>
      </StartButton>
      <BarSearch>
        <SearchIcon size={27} weight={2.500} />
        <SearchInput aria-label="작업 표시줄 검색" placeholder="검색" />
        <DeskPicture />
      </BarSearch>
      {apps.map((app) => (
        <TaskButton key={app.name} aria-label={app.name}>
          {app.logo ? <OneNoteLogo size={42} /> : <Icon w={42} h={42} stroke="none">{app.art}</Icon>}
          <Running $on={app.on} $wide={app.wide} />
        </TaskButton>
      ))}
    </BarGroup>
    <Tray>
      <TrayItem $width={60} aria-label="숨겨진 아이콘">
        <Icon w={20} h={14} strokeWidth="2.500"><path d="m1 12 9-9 9 9" /></Icon>
      </TrayItem>
      <TrayItem $width={50} $size={36}>A</TrayItem>
      <TrayItem $width={86} $size={30}>한</TrayItem>
      <TrayItem $width={42} aria-label="Wi-Fi">
        <Icon w={28} h={28} strokeWidth="2.500">
          <path d="M1 11c7-8 19-8 26 0M5 16c5-6 13-6 18 0M9 20c3-3 7-3 10 0" />
          <circle cx="14" cy="23" r="2" fill="#fff" />
        </Icon>
      </TrayItem>
      <TrayItem $width={42} aria-label="볼륨">
        <Icon w={29} h={28}>
          <path d="M1 10h5l7-6v20l-7-6H1ZM16 10c2 2 2 6 0 8" />
          <path d="M20 6c4 5 4 11 0 16M24 3c5 7 5 15 0 22" stroke="#666" />
        </Icon>
      </TrayItem>
      <TrayItem $width={42} aria-label="배터리">
        <Icon w={30} h={28}>
          <path d="M10 6h12a3 3 0 0 1 3 3v11a3 3 0 0 1-3 3H5a3 3 0 0 1-3-3v-6M28 12v5" />
          <path d="M6 0 0 9h4l-2 6 7-9H6l2-6ZM5 20V15l7-7v9l-3 3Z" fill="#fff" stroke="none" />
        </Icon>
      </TrayItem>
      <Clock>
        <div>오후 1:46</div>
        <div>2024-10-02</div>
      </Clock>
      <TrayItem $width={58} aria-label="알림">
        <Icon w={26} h={28}>
          <path d="M2 22c3-3 3-6 3-10 0-6 4-10 8-10s8 4 8 10c0 4 0 7 3 10ZM9 23c1 4 7 4 8 0" />
        </Icon>
      </TrayItem>
      <TrayItem $width={62} aria-label="Copilot">
        <Icon w={42} h={42} stroke="none">
          <defs>
            <linearGradient id="wing" x1="0" y1="0" x2="0" y2="1">
              <stop offset="0" stopColor="#1f9cf0" />
              <stop offset=".55" stopColor="#4fc07c" />
              <stop offset="1" stopColor="#ffd02b" />
            </linearGradient>
            <linearGradient id="tail" x1="0" y1="0" x2="0" y2="1">
              <stop offset="0" stopColor="#b65cf0" />
              <stop offset="1" stopColor="#fb6b60" />
            </linearGradient>
          </defs>
          <path d="M20 0h5c3 0 5 3 6 11H20Z" fill="#1644c8" />
          <path d="M9 0h17c-3 1-4 5-5 9l-4 15c-1 3-2 4-5 4H5c-4 0-6-3-5-8L4 5c1-3 2-5 5-5Z" fill="url(#wing)" />
          <path d="M26 11h11c4 0 6 3 5 8l-3 13H13c4 0 6-2 7-6l3-11c1-3 1-4 3-4Z" fill="url(#tail)" />
          <rect x="10" y="29" width="32" height="13" rx="3" fill="#ffc400" />
          <text x="26" y="40" textAnchor="middle" fontSize="12" fontWeight="700" fill="#111">PRE</text>
        </Icon>
      </TrayItem>
    </Tray>
  </Bar>
)

const App = () => (
  <Page>
    <GlobalStyle />
    <AppTitleBar />
    <Menu />
    <Ribbon />
    <Notebook />
    <Workspace>
      <Document />
      <PageList />
    </Workspace>
    <Taskbar />
  </Page>
)

export default App
